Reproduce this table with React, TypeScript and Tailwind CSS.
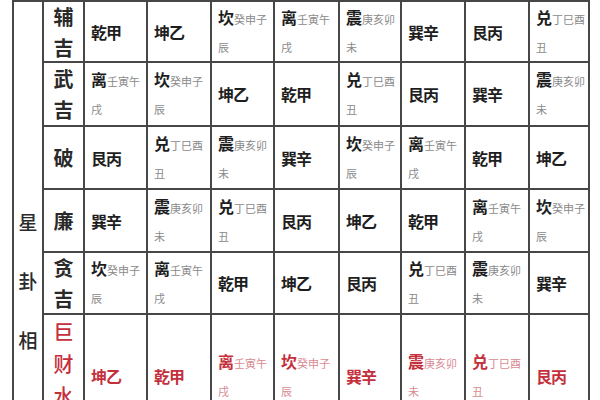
const rows: { name: string[]; red?: boolean; cells: string[][] }[] = [
  {
    name: ['辅', '吉'],
    cells: [['乾甲'], ['坤乙'], ['坎', '癸申子', '辰'], ['离', '壬寅午', '戌'], ['震', '庚亥卯', '未'], ['巽辛'], ['艮丙'], ['兑', '丁巳酉', '丑']],
  },
  {
    name: ['武', '吉'],
    cells: [['离', '壬寅午', '戌'], ['坎', '癸申子', '辰'], ['坤乙'], ['乾甲'], ['兑', '丁巳酉', '丑'], ['艮丙'], ['巽辛'], ['震', '庚亥卯', '未']],
  },
  {
    name: ['破'],
    cells: [['艮丙'], ['兑', '丁巳酉', '丑'], ['震', '庚亥卯', '未'], ['巽辛'], ['坎', '癸申子', '辰'], ['离', '壬寅午', '戌'], ['乾甲'], ['坤乙']],
  },
  {
    name: ['廉'],
    cells: [['巽辛'], ['震', '庚亥卯', '未'], ['兑', '丁巳酉', '丑'], ['艮丙'], ['坤乙'], ['乾甲'], ['离', '壬寅午', '戌'], ['坎', '癸申子', '辰']],
  },
  {
    name: ['贪', '吉'],
    cells: [['坎', '癸申子', '辰'], ['离', '壬寅午', '戌'], ['乾甲'], ['坤乙'], ['艮丙'], ['兑', '丁巳酉', '丑'], ['震', '庚亥卯', '未'], ['巽辛']],
  },
  {
    name: ['巨', '财', '水'],
    red: true,
    cells: [['坤乙'], ['乾甲'], ['离', '壬寅午', '戌'], ['坎', '癸申子', '辰'], ['巽辛'], ['震', '庚亥卯', '未'], ['兑', '丁巳酉', '丑'], ['艮丙']],
  },
];

function GuaCell({ parts, red }: { parts: string[]; red?: boolean }) {
  const main = red ? 'text-[#c42f3c]' : 'text-[#1e1e1e]';
  const sub = red ? 'text-[#d98a92]' : 'text-[#8a8a8a]';
  if (parts.length === 1) {
    return (
      <div className="bg-white flex items-center pl-[6px]">
        <span className={`text-[16px] font-bold tracking-[-1px] ${main}`}>{parts[0]}</span>
      </div>
    );
  }
  return (
    <div className="bg-white flex flex-col justify-center pl-[6px] leading-[28px]">
      <div className="whitespace-nowrap">
        <span className={`text-[16px] font-bold ${main}`}>{parts[0]}</span>
        <span className={`text-[11px] ${sub}`}>{parts[1]}</span>
      </div>
      <div className={`text-[11px] ${sub}`}>{parts[2]}</div>
    </div>
  );
}

export default function App() {
  return (
    <div className="w-[600px] h-[400px] overflow-hidden bg-white font-['Noto_Sans_CJK_SC',sans-serif]">
      <div className="ml-[12px] w-fit p-[2px] gap-[2px] bg-[#474747] grid grid-cols-[28px_39px_61px_62px_61px_63px_60px_62px_62px_58px] grid-rows-[59px_62px_61px_61px_60px_122px]">
        <div className="row-span-6 bg-white flex flex-col items-center pt-[190px] text-[19px] font-medium leading-[59px] text-[#2a2a2a]">
          <span>星</span>
          <span>卦</span>
          <span>相</span>
        </div>
        {rows.map((row, i) => (
          <div key={i} className="contents">
            {row.red ? (
              <div className="bg-white flex flex-col items-center pt-[1px] text-[20px] font-medium leading-[32px] text-[#c42f3c]">
                {row.name.map((c, k) => (
                  <span key={k}>{c}</span>
                ))}
              </div>
            ) : (
              <div className="bg-white flex flex-col items-center justify-center text-[20px] font-bold leading-[31px] text-[#2a2a2a]">
                {row.name.map((c, k) => (
                  <span key={k}>{c}</span>
                ))}
              </div>
            )}
            {row.cells.map((parts, j) => (
              <GuaCell key={j} parts={parts} red={row.red} />
            ))}
          </div>
        ))}
      </div>
    </div>
  );
}
